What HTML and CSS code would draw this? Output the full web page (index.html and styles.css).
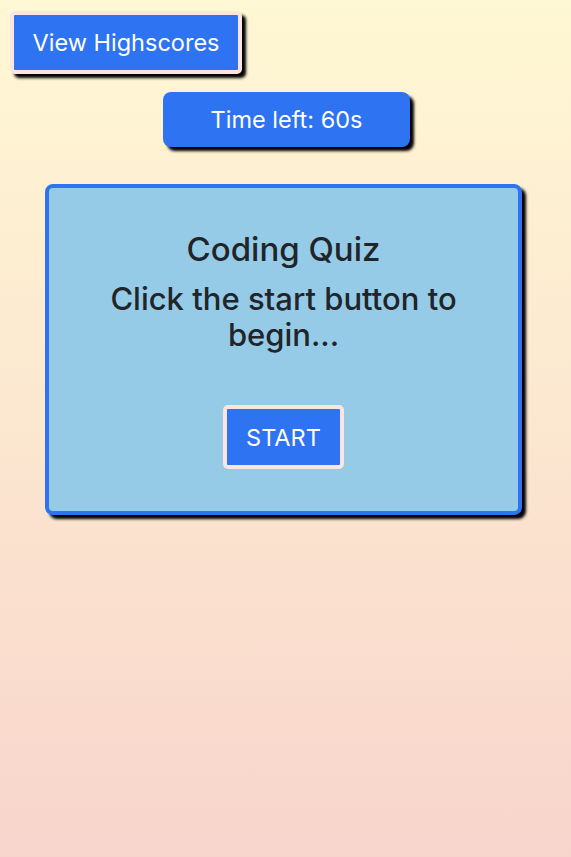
FILE: index.html
```html
<!DOCTYPE html>
<html>
<head>
<meta charset="utf-8">
<link rel="stylesheet" href="styles.css">
</head>
<body>
<header class="top">
  <button class="btn btn-scores">View Highscores</button>
</header>
<div class="timer">Time left: 60s</div>
<main class="card">
  <h1 class="title">Coding Quiz</h1>
  <h2 class="subtitle">Click the start button to begin...</h2>
  <button class="btn btn-start">START</button>
</main>
</body>
</html>
```
FILE: styles.css
```css
html, body {
  margin: 0;
  padding: 0;
}
body {
  min-height: 857px;
  background: linear-gradient(to bottom, #fff8d4 0%, #f8d5cc 100%);
  font-family: Inter, "Noto Sans", sans-serif;
  color: #212529;
  box-sizing: border-box;
  padding-top: 11px;
}
.top {
  padding-left: 10px;
}
.btn {
  font-family: Inter, "Noto Sans", sans-serif;
  background: #2e73f2;
  color: #fff;
  border: 4px solid #fbe4e1;
  border-radius: 5px;
  cursor: pointer;
}
.btn-scores {
  width: 232px;
  height: 63px;
  font-size: 23.5px;
  padding: 0;
  box-shadow: 4px 4px 3px #000;
}
.timer {
  width: 247px;
  height: 55px;
  margin: 18px 0 0 163px;
  background: #2e73f2;
  color: #fff;
  border-radius: 8px;
  box-shadow: 4px 4px 3px #000;
  display: flex;
  align-items: center;
  justify-content: center;
  font-size: 23.5px;
}
.card {
  box-sizing: border-box;
  width: 477px;
  height: 331px;
  margin: 37px 0 0 45px;
  background: #95cbe7;
  border: 4px solid #2e73f2;
  border-radius: 8px;
  box-shadow: 4px 4px 3px #000;
  display: flex;
  flex-direction: column;
  align-items: center;
  text-align: center;
}
.title {
  margin: 41px 0 0;
  font-size: 33px;
  font-weight: 500;
  line-height: 40px;
}
.subtitle {
  margin: 12px 50px 0;
  font-size: 31px;
  font-weight: 500;
  line-height: 36px;
}
.btn-start {
  margin-top: 52px;
  width: 121px;
  height: 64px;
  font-size: 23.5px;
  padding: 0;
}
```
